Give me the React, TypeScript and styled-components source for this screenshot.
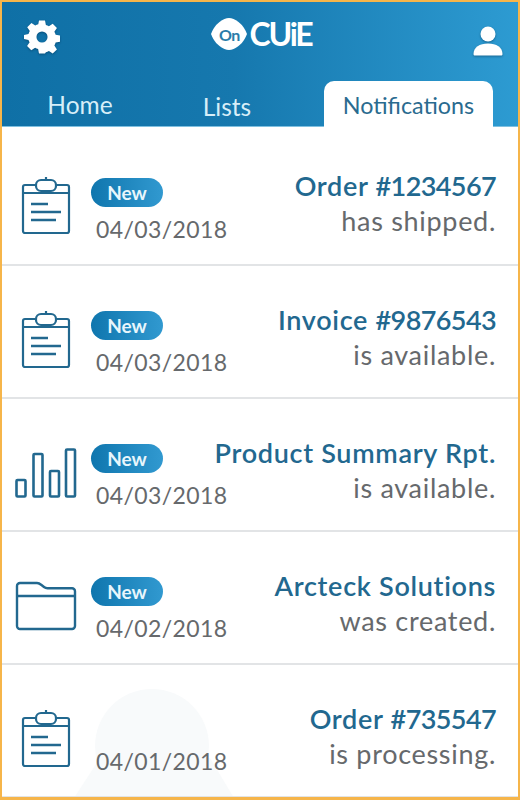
import React from "react";
import styled, { createGlobalStyle } from "styled-components";

const Global = createGlobalStyle`
  html, body { margin: 0; padding: 0; background: #fff; }
  * { box-sizing: border-box; }
`;

const Frame = styled.div`
  position: relative;
  width: 520px;
  height: 800px;
  overflow: hidden;
  border-style: solid;
  border-color: #f6b54a;
  border-width: 2px 2px 3px 2px;
  background: #fff;
  font-family: Lato, "Noto Sans", sans-serif;
`;

const Header = styled.header`
  height: 125px;
  display: flex;
  flex-direction: column;
  background: linear-gradient(90deg, #0f70a6 0%, #1678ae 45%, #2d9bd2 100%);
  border-bottom: 1px solid #7fc0e0;
`;

const TopBar = styled.div`
  height: 78px;
  display: flex;
  align-items: flex-start;
  justify-content: space-between;
  padding: 15px 11px 0 21px;
`;

const IconSlot = styled.div`
  width: 38px;
  height: 40px;
  display: flex;
  align-items: center;
  justify-content: center;
  filter: drop-shadow(0 1px 1px rgba(0, 40, 70, 0.45));
`;

const UserSlot = styled(IconSlot)`
  margin-top: 4px;
`;

const Logo = styled.div`
  display: flex;
  align-items: center;
  gap: 1px;
  margin-right: 8px;
`;

const LogoMark = styled.div`
  position: relative;
  width: 38px;
  height: 34px;
  display: flex;
  align-items: center;
  justify-content: center;
`;

const LogoShape = styled.svg`
  position: absolute;
  inset: 0;
`;

const LogoOn = styled.span`
  position: relative;
  color: #2a7ca9;
  font-size: 16px;
  font-weight: 700;
  letter-spacing: -0.5px;
`;

const LogoWord = styled.span`
  color: #fff;
  font-size: 32px;
  font-weight: 700;
  line-height: 34px;
  letter-spacing: -2.2px;
  font-family: Lato, sans-serif;
`;

const Tabs = styled.nav`
  flex: 1;
  display: grid;
  grid-template-columns: 156px 138px 1fr;
  align-items: end;
`;

const Tab = styled.div<{ $raised?: boolean }>`
  height: 40px;
  display: flex;
  align-items: center;
  justify-content: center;
  font-size: 24.5px;
  color: #d7eef8;
  padding-bottom: ${(p) => (p.$raised ? "4px" : "0")};
`;

const ActiveTab = styled(Tab)`
  height: 46px;
  margin: 0 25px -1px 28px;
  padding-top: 2px;
  font-size: 23.3px;
  color: #2a6b8f;
  background: #fff;
  border-radius: 10px 10px 0 0;
`;

const List = styled.main`
  position: relative;
  z-index: 1;
  display: flex;
  flex-direction: column;
`;

const Row = styled.article`
  height: 133px;
  display: grid;
  grid-template-columns: 89px minmax(0, 1fr) auto;
  align-items: center;
  padding: 0 22px 0 0;
  border-bottom: 2px solid #e2e4e6;
  &:first-child { height: 139px; padding-top: 5px; }
`;

const IconCell = styled.div`
  display: flex;
  justify-content: center;
  color: #22688f;
  padding-right: 1px;
  margin-top: 16px;
`;

const Meta = styled.div`
  display: flex;
  flex-direction: column;
  align-items: flex-start;
  gap: 8px;
  margin-top: 24px;
  white-space: nowrap;
`;

const Badge = styled.span<{ $hidden?: boolean }>`
  width: 72px;
  height: 29px;
  border-radius: 15px;
  display: flex;
  align-items: center;
  justify-content: center;
  color: #e8f6fc;
  font-size: 19px;
  font-weight: 700;
  background: linear-gradient(90deg, #0f76ae, #3199d0);
  visibility: ${(p) => (p.$hidden ? "hidden" : "visible")};
`;

const DateText = styled.time`
  margin-left: 5px;
  color: #66696c;
  font-size: 23px;
  line-height: 28px;
  letter-spacing: 0.4px;
`;

const Info = styled.div`
  display: flex;
  flex-direction: column;
  align-items: flex-end;
  gap: 5px;
  margin-top: 11px;
`;

const Title = styled.div`
  color: #22688f;
  font-size: 27px;
  font-weight: 600;
  line-height: 30px;
  letter-spacing: 0.7px;
  white-space: nowrap;
`;

const Num = styled.span`
  letter-spacing: -0.6px;
`;

const Sub = styled.div`
  color: #66696c;
  font-size: 27px;
  line-height: 30px;
  letter-spacing: 0.7px;
  white-space: nowrap;
`;

const Ghost = styled.svg`
  position: absolute;
  left: 68px;
  top: 686px;
`;

const Gear = () => (
  <svg width="36" height="36" viewBox="0 0 24 24" fill="#fff" fillRule="evenodd">
    <path d="M10 1h4l.6 3a8.2 8.2 0 0 1 2 .85l2.55-1.7 2.8 2.8-1.7 2.55c.37.63.65 1.3.85 2l3 .6v4l-3 .6c-.2.7-.48 1.37-.85 2l1.7 2.55-2.8 2.8-2.55-1.7c-.63.37-1.3.65-2 .85L14 23h-4l-.6-3a8.2 8.2 0 0 1-2-.85l-2.55 1.7-2.8-2.8 1.7-2.55A8.2 8.2 0 0 1 3 14l-3-.6v-2.800l3-.6c.2-.7.48-1.37.85-2l-1.7-2.55 2.8-2.8 2.55 1.7c.63-.37 1.3-.65 2-.85L10 1Zm2 7.300a3.700 3.700 0 1 0 0 7.400 3.700 3.700 0 0 0 0-7.400Z" />
  </svg>
);

const User = () => (
  <svg width="30" height="30" viewBox="0 0 30 30" fill="#fff">
    <circle cx="15" cy="8" r="7.500" />
    <path d="M0.500 28c0-6.500 6-10.500 14.500-10.500S29.500 21.500 29.500 28c0 1-.6 1.500-1.500 1.500H2c-.9 0-1.500-.5-1.500-1.500Z" />
  </svg>
);

const Clipboard = () => (
  <svg width="50" height="60" viewBox="0 0 50 60" fill="none" stroke="currentColor" strokeWidth="2.200">
    <rect x="2" y="9" width="46" height="48" rx="2" />
    <path d="M2 17h46" />
    <rect x="15" y="4" width="20" height="11" rx="5" fill="#fff" />
    <path d="M25 1v3" />
    <path d="M10 28h17M10 36h30M10 44h25" strokeWidth="2.600" />
  </svg>
);

const Bars = () => (
  <svg width="62" height="50" viewBox="0 0 62 50" fill="none" stroke="currentColor" strokeWidth="2.600">
    <rect x="1.500" y="32" width="9" height="16.500" rx="1" />
    <rect x="18.500" y="6" width="9" height="42.500" rx="1" />
    <rect x="35" y="23" width="9" height="25.500" rx="1" />
    <rect x="51" y="1.500" width="9" height="47" rx="1" />
  </svg>
);

const Folder = () => (
  <svg width="62" height="50" viewBox="0 0 62 50" fill="none" stroke="currentColor" strokeWidth="2.400">
    <path d="M2 5a3 3 0 0 1 3-3h17c2 0 3 .8 4.500 2L29 6c1 .8 2 1.200 3.500 1.200H57a3 3 0 0 1 3 3V45a3 3 0 0 1-3 3H5a3 3 0 0 1-3-3V5Z" />
    <path d="M2 15h58" />
  </svg>
);

type Item = {
  icon: React.ReactNode;
  isNew: boolean;
  date: string;
  title: string;
  num?: string;
  sub: string;
};

const items: Item[] = [
  { icon: <Clipboard />, isNew: true, date: "04/03/2018", title: "Order ", num: "#1234567", sub: "has shipped." },
  { icon: <Clipboard />, isNew: true, date: "04/03/2018", title: "Invoice ", num: "#9876543", sub: "is available." },
  { icon: <Bars />, isNew: true, date: "04/03/2018", title: "Product Summary Rpt.", sub: "is available." },
  { icon: <Folder />, isNew: true, date: "04/02/2018", title: "Arcteck Solutions", sub: "was created." },
  { icon: <Clipboard />, isNew: false, date: "04/01/2018", title: "Order ", num: "#735547", sub: "is processing." },
];

export default function App() {
  return (
    <Frame>
      <Global />
      <Header>
        <TopBar>
          <IconSlot><Gear /></IconSlot>
          <Logo>
            <LogoMark>
              <LogoShape width="38" height="34" viewBox="0 0 38 34">
                <path d="M19 1c3 0 6 1.500 9.500 4 3 2.200 6 5.500 8.500 12-2.500 6.500-5.500 9.800-8.500 12-3.500 2.500-6.500 4-9.500 4s-6-1.500-9.500-4C6.500 26.800 3.500 23.500 1 17c2.500-6.500 5.500-9.800 8.500-12C13 2.500 16 1 19 1Z" fill="#fff" />
              </LogoShape>
              <LogoOn>On</LogoOn>
            </LogoMark>
            <LogoWord>CUiE</LogoWord>
          </Logo>
          <UserSlot><User /></UserSlot>
        </TopBar>
        <Tabs>
          <Tab $raised>Home</Tab>
          <Tab>Lists</Tab>
          <ActiveTab>Notifications</ActiveTab>
        </Tabs>
      </Header>
      <Ghost width="172" height="110" viewBox="0 0 172 110" fill="#f8fafb">
        <circle cx="82" cy="58" r="57" />
        <path d="M4 110 30 70h110l24 40Z" />
      </Ghost>
      <List>
        {items.map((it, i) => (
          <Row key={i}>
            <IconCell>{it.icon}</IconCell>
            <Meta>
              <Badge $hidden={!it.isNew}>New</Badge>
              <DateText>{it.date}</DateText>
            </Meta>
            <Info>
              <Title>{it.title}{it.num && <Num>{it.num}</Num>}</Title>
              <Sub>{it.sub}</Sub>
            </Info>
          </Row>
        ))}
      </List>
    </Frame>
  );
}
